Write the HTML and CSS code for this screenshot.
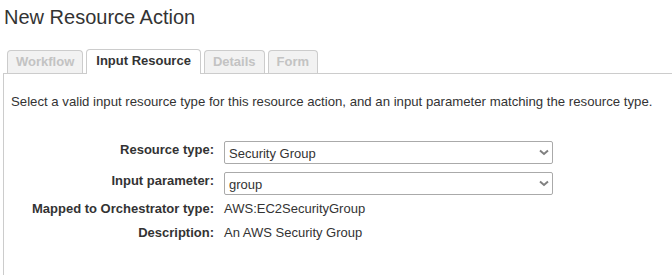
FILE: index.html
```html
<!DOCTYPE html>
<html>
<head>
<meta charset="utf-8">
<link rel="stylesheet" href="styles.css">
</head>
<body>
<h1 class="title">New Resource Action</h1>
<div class="tabs">
  <div class="tab disabled">Workflow</div>
  <div class="tab active">Input Resource</div>
  <div class="tab disabled">Details</div>
  <div class="tab disabled">Form</div>
</div>
<div class="panel">
  <p class="intro">Select a valid input resource type for this resource action, and an input parameter matching the resource type.</p>
  <div class="form">
    <div class="label">Resource type:</div>
    <div class="select"><span>Security Group</span><svg class="chev" width="10" height="7" viewBox="0 0 10 7"><path d="M1 1.5 L5 5 L9 1.5" fill="none" stroke="#808080" stroke-width="2"/></svg></div>
    <div class="label">Input parameter:</div>
    <div class="select last"><span>group</span><svg class="chev" width="10" height="7" viewBox="0 0 10 7"><path d="M1 1.5 L5 5 L9 1.5" fill="none" stroke="#808080" stroke-width="2"/></svg></div>
    <div class="label info">Mapped to Orchestrator type:</div>
    <div class="value">AWS:EC2SecurityGroup</div>
    <div class="label info">Description:</div>
    <div class="value">An AWS Security Group</div>
  </div>
</div>
</body>
</html>
```
FILE: styles.css
```css
html, body {
  margin: 0;
  padding: 0;
  background: #fff;
  font-family: "Liberation Sans", Arial, sans-serif;
  color: #333;
}
.title {
  margin: 0;
  padding: 5px 0 0 4px;
  font-size: 20px;
  font-weight: normal;
  line-height: 24px;
  color: #333;
}
.tabs {
  display: flex;
  gap: 3px;
  margin: 20px 0 0 7px;
  height: 24px;
  align-items: flex-end;
}
.tab {
  height: 23px;
  box-sizing: border-box;
  padding: 0 8px;
  font-size: 13px;
  font-weight: bold;
  line-height: 22px;
  border: 1px solid #ccc;
  border-bottom: none;
  border-radius: 4px 4px 0 0;
}
.tab.disabled {
  background: #f2f2f2;
  color: #c3c3c3;
}
.tab.active {
  background: #fff;
  color: #333;
  height: 25px;
  margin-bottom: -1px;
  padding: 0 9px;
  position: relative;
}
.panel {
  margin-left: 3px;
  border-top: 1px solid #ccc;
  border-left: 1px solid #ccc;
  height: 210px;
}
.intro {
  margin: 0;
  padding: 20px 0 0 7px;
  font-size: 13.2px;
  line-height: 16px;
}
.form {
  display: grid;
  grid-template-columns: 210px 329px;
  column-gap: 10px;
  margin-top: 31px;
  align-items: start;
}
.label {
  text-align: right;
  font-weight: bold;
  font-size: 13px;
  line-height: 16px;
  padding-top: 1px;
}
.label.info {
  line-height: 24px;
  padding-top: 0;
}
.select {
  height: 23px;
  box-sizing: border-box;
  border: 1px solid #aaa;
  border-radius: 2px;
  display: flex;
  align-items: center;
  justify-content: space-between;
  padding: 0 3px 0 4px;
  font-size: 13px;
  margin-bottom: 8px;
}
.select.last { margin-bottom: 2px; }
.select span { padding-top: 1px; }
.value {
  font-size: 13px;
  line-height: 24px;
}
.chev { display: block; }
```
